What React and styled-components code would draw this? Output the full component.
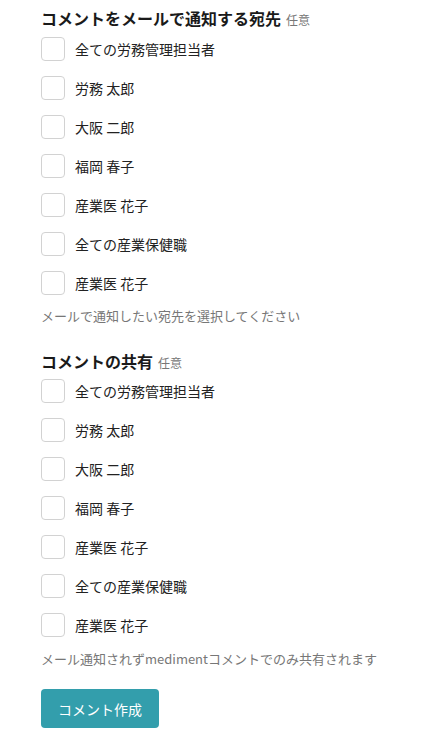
import styled, { createGlobalStyle } from 'styled-components';

const GlobalStyle = createGlobalStyle`
  body {
    margin: 0;
    background: #ffffff;
    font-family: 'Noto Sans CJK JP', 'Noto Sans', sans-serif;
    color: #222222;
  }
`;

const Page = styled.div`
  padding: 6px 41px 0 41px;
  display: flex;
  flex-direction: column;
  align-items: flex-start;
`;

const Section = styled.section`
  display: flex;
  flex-direction: column;
  margin-bottom: ${(p) => p.$after}px;
`;

const Heading = styled.h2`
  margin: 0;
  font-size: 16px;
  line-height: 24px;
  font-weight: bold;
  color: #1a1a1a;
  display: flex;
  align-items: baseline;
  gap: 5px;
`;

const Optional = styled.span`
  font-size: 12px;
  font-weight: normal;
  color: #777777;
`;

const List = styled.div`
  display: flex;
  flex-direction: column;
  gap: 15px;
  margin-top: ${(p) => p.$top}px;
`;

const Row = styled.label`
  display: flex;
  align-items: center;
  gap: 10px;
  height: 24px;
  font-size: 14px;
  color: #222222;
`;

const Box = styled.span`
  width: 22px;
  height: 22px;
  border: 1px solid #d2d2d2;
  border-radius: 4px;
  background: #ffffff;
  flex-shrink: 0;
`;

const Help = styled.p`
  margin: ${(p) => p.$top}px 0 0 0;
  font-size: 13px;
  line-height: 20px;
  color: #777777;
`;

const Button = styled.button`
  width: 118px;
  height: 39px;
  border: none;
  border-radius: 4px;
  background: #339eac;
  color: #ffffff;
  font-family: inherit;
  font-size: 14px;
`;

const people = [
  '全ての労務管理担当者',
  '労務 太郎',
  '大阪 二郎',
  '福岡 春子',
  '産業医 花子',
  '全ての産業保健職',
  '産業医 花子',
];

const Group = ({ title, help, top, helpTop, after }) => (
  <Section $after={after}>
    <Heading>
      {title}
      <Optional>任意</Optional>
    </Heading>
    <List $top={top}>
      {people.map((name, i) => (
        <Row key={i}>
          <Box />
          {name}
        </Row>
      ))}
    </List>
    <Help $top={helpTop}>{help}</Help>
  </Section>
);

const App = () => {
  return (
    <Page>
      <GlobalStyle />
      <Group
        title="コメントをメールで通知する宛先"
        help="メールで通知したい宛先を選択してください"
        top={5}
        helpTop={11}
        after={23}
      />
      <Group
        title="コメントの共有"
        help="メール通知されずmedimentコメントでのみ共有されます"
        top={4}
        helpTop={12}
        after={20}
      />
      <Button>コメント作成</Button>
    </Page>
  );
};

export default App;
